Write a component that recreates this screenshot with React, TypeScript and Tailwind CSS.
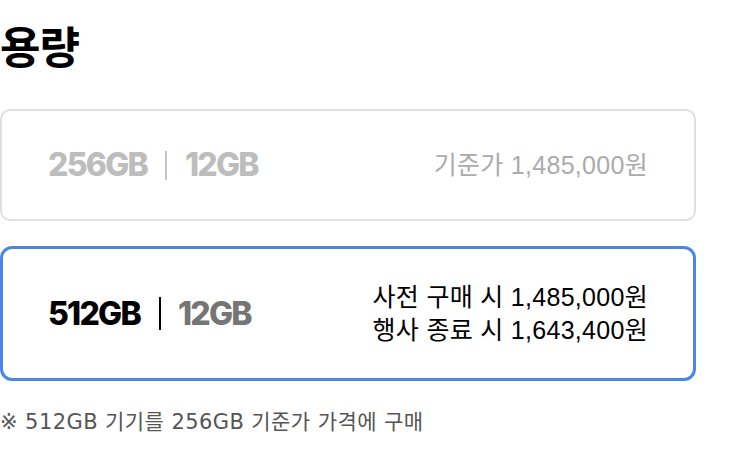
import React from 'react';

const krFont = "font-['Noto_Sans_CJK_KR',sans-serif]";
const priceFont = "font-['Liberation_Sans','Noto_Sans_CJK_KR',sans-serif]";
const noteFont = "font-['DejaVu_Sans','Noto_Sans_CJK_KR',sans-serif]";
const gbFont = "font-['Inter',sans-serif]";

type Option = {
  storage: string;
  ram: string;
  prices: string[];
  selected: boolean;
};

const options: Option[] = [
  { storage: '256GB', ram: '12GB', prices: ['기준가 1,485,000원'], selected: false },
  {
    storage: '512GB',
    ram: '12GB',
    prices: ['사전 구매 시 1,485,000원', '행사 종료 시 1,643,400원'],
    selected: true,
  },
];

function OptionCard({ option }: { option: Option }) {
  const { storage, ram, prices, selected } = option;
  return (
    <div
      className={
        selected
          ? 'flex items-center justify-between h-[135px] rounded-[12px] border-[3px] border-[#4a86e8] pl-[45px] pr-[45px]'
          : 'flex items-center justify-between h-[112px] rounded-[10px] border-2 border-[#e0e0e0] pl-[46px] pr-[46px]'
      }
    >
      <div className={`flex items-center ${gbFont} font-extrabold text-[32px] tracking-[-0.055em] leading-none`}>
        <span className={selected ? 'text-black' : 'text-[#bdbdbd]'}>{storage}</span>
        <span
          className={
            selected
              ? 'ml-[19px] mr-[17px] w-[2px] h-[33px] bg-black'
              : 'ml-[18px] mr-[18px] w-[2px] h-[29px] bg-[#c4c4c4]'
          }
        />
        <span className={selected ? 'text-[#757575]' : 'text-[#bdbdbd]'}>{ram}</span>
      </div>
      <div
        className={`flex flex-col items-end ${priceFont} text-[25px] leading-[33px] tracking-[0.012em] ${
          selected ? 'text-black' : 'text-[#ababab]'
        }`}
      >
        {prices.map((p) => (
          <span key={p}>{p}</span>
        ))}
      </div>
    </div>
  );
}

export default function App() {
  return (
    <div className={`w-[742px] h-[456px] bg-white overflow-hidden ${krFont}`}>
      <div className="w-[696px]">
        <h1 className="pt-[19px] text-[44px] font-bold leading-[52px] text-black tracking-[-0.02em]">용량</h1>
        <div className="mt-[38px] flex flex-col gap-[25px]">
          {options.map((o) => (
            <OptionCard key={o.storage} option={o} />
          ))}
        </div>
        <p className={`mt-[27px] ${noteFont} text-[21px] leading-[28px] tracking-[0.02em] text-[#555555]`}>
          ※ 512GB 기기를 256GB 기준가 가격에 구매
        </p>
      </div>
    </div>
  );
}
